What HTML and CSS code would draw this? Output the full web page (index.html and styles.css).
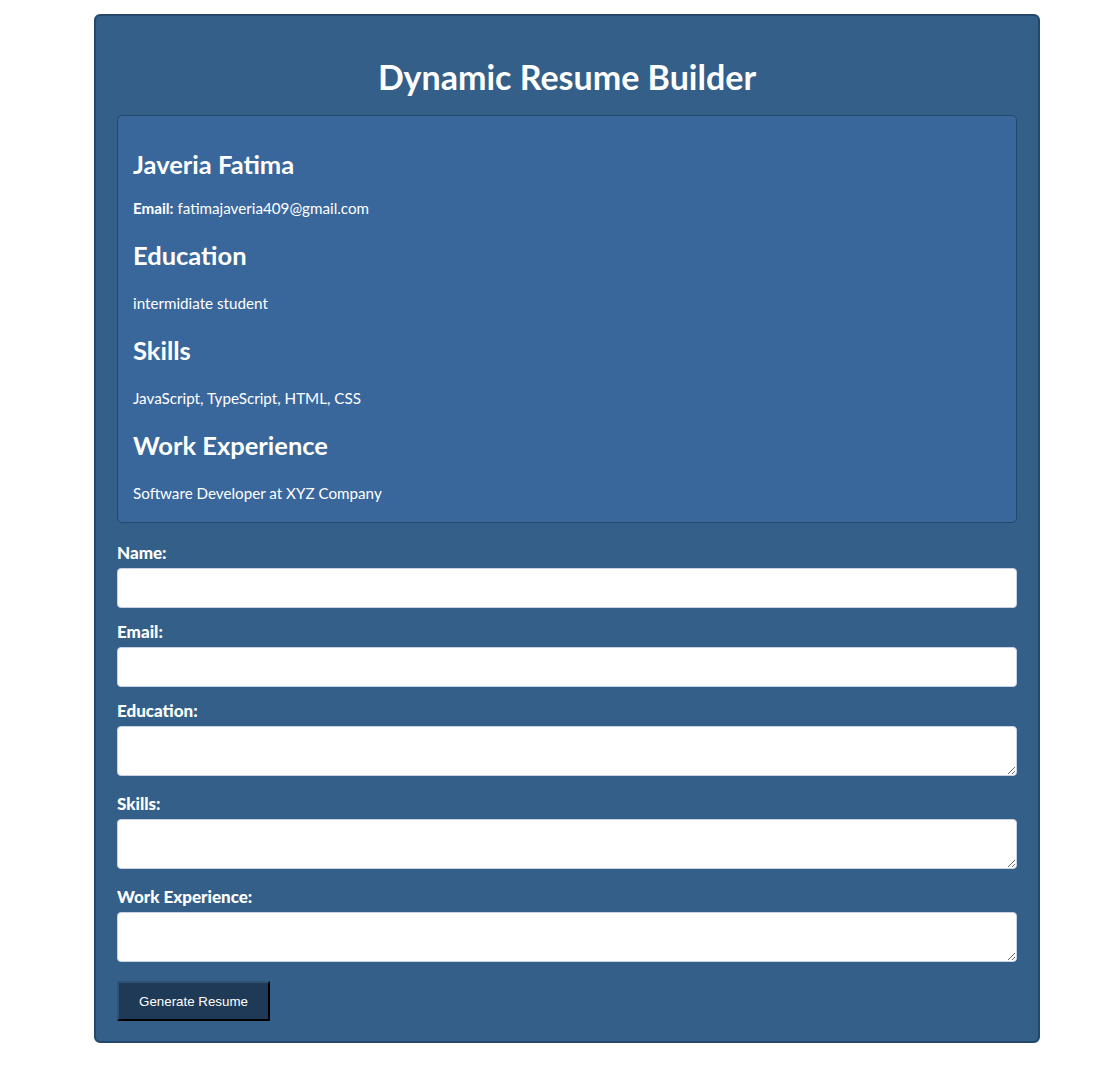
FILE: index.html
```html
<!DOCTYPE html>
<html lang="en">
<head>
<meta charset="UTF-8">
<title>Dynamic Resume Builder</title>
<link rel="stylesheet" href="styles.css">
</head>
<body>
<div class="container">
  <h1 class="title">Dynamic Resume Builder</h1>
  <div class="resume">
    <h2 class="res-h res-name">Javeria Fatima</h2>
    <p class="res-p"><strong>Email:</strong> fatimajaveria409@gmail.com</p>
    <h3 class="res-h">Education</h3>
    <p class="res-p">intermidiate student</p>
    <h3 class="res-h">Skills</h3>
    <p class="res-p">JavaScript, TypeScript, HTML, CSS</p>
    <h3 class="res-h">Work Experience</h3>
    <p class="res-p">Software Developer at XYZ Company</p>
  </div>
  <form class="form">
    <label class="lbl" for="name">Name:</label>
    <input class="field" id="name" type="text">
    <label class="lbl" for="email">Email:</label>
    <input class="field" id="email" type="email">
    <label class="lbl" for="edu">Education:</label>
    <textarea class="area" id="edu"></textarea>
    <label class="lbl" for="skills">Skills:</label>
    <textarea class="area" id="skills"></textarea>
    <label class="lbl" for="work">Work Experience:</label>
    <textarea class="area" id="work"></textarea>
    <button class="btn" type="button">Generate Resume</button>
  </form>
</div>
</body>
</html>
```

FILE: styles.css
```css
html, body {
  margin: 0;
  padding: 0;
  background: #ffffff;
}
body {
  font-family: "Lato", "Open Sans", sans-serif;
  color: #ffffff;
}
.container {
  box-sizing: border-box;
  width: 946px;
  margin: 14px 0 32px 94px;
  padding: 20px 21px 20px 21px;
  background: #335f88;
  border: 2px solid #24486c;
  border-radius: 6px;
}
.title {
  margin: 21px 0 18px 0;
  text-align: center;
  font-size: 34px;
  line-height: 40px;
  font-weight: 700;
}
.resume {
  background: #39679b;
  border: 1px solid #24486c;
  border-radius: 5px;
  padding: 14px 15px 19px 15px;
  margin-bottom: 20px;
}
.res-h {
  margin: 20px 0 24px 0;
  font-size: 25.5px;
  line-height: 28px;
  font-weight: 700;
}
.res-name {
  margin-bottom: 20px;
}
.res-p {
  margin: 0 0 23px 0;
  font-size: 15.2px;
  line-height: 20px;
}
.res-p:last-child {
  margin-bottom: 0;
}
.res-p strong {
  font-weight: 700;
}
.form {
  display: flex;
  flex-direction: column;
  align-items: stretch;
}
.lbl {
  display: block;
  font-size: 17px;
  line-height: 20px;
  font-weight: 900;
  margin-bottom: 5px;
}
.field, .area {
  display: block;
  box-sizing: border-box;
  width: 100%;
  background: #ffffff;
  border: 1px solid #c9d3e6;
  border-radius: 4px;
  padding: 8px;
  font-size: 14px;
}
.field {
  height: 40px;
  margin-bottom: 14px;
}
.area {
  height: 50px;
  margin-bottom: 18px;
  resize: vertical;
}
.btn {
  align-self: flex-start;
  width: 153px;
  height: 40px;
  margin-top: 1px;
  background: #1f3a56;
  color: #ffffff;
  font-family: "Liberation Sans", Arial, sans-serif;
  font-size: 13.33px;
  border-style: solid;
  border-width: 2px;
  border-color: #2d5276 #000000 #000000 #2d5276;
  cursor: pointer;
}
```
